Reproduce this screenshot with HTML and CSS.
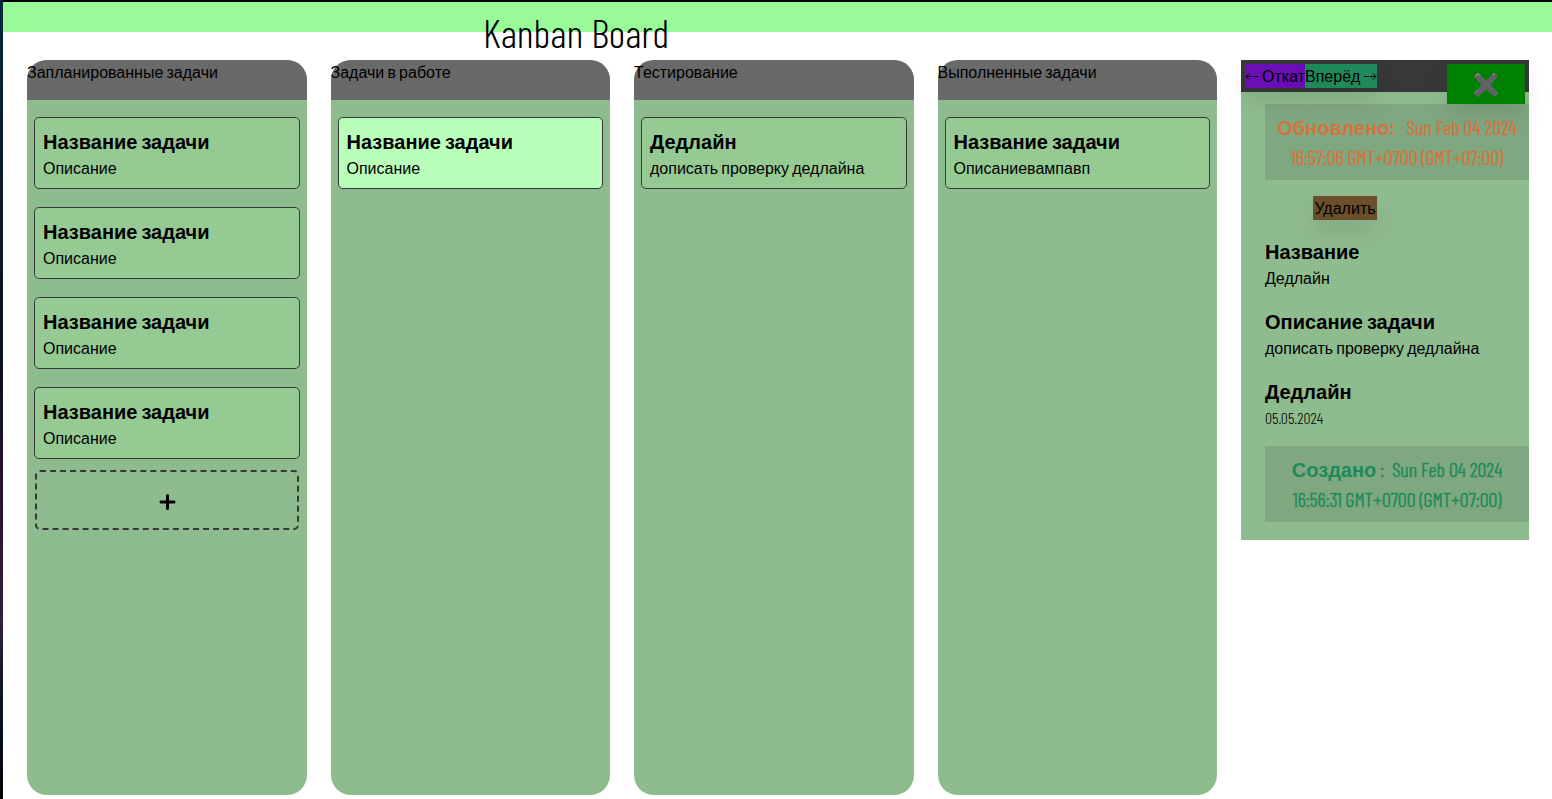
FILE: index.html
```html
<!DOCTYPE html>
<html lang="ru">
<head>
<meta charset="utf-8">
<meta name="viewport" content="width=device-width, initial-scale=1">
<title>Kanban Board</title>
<link rel="stylesheet" href="styles.css">
</head>
<body>
<div class="app">
  <header class="topbar"><h1 class="topbar-title">Kanban Board</h1></header>
  <main class="board">
    <section class="column">
      <h2 class="column-title">Запланированные задачи</h2>
      <div class="column-body">
        <article class="card"><h3 class="card-title">Название задачи</h3><p class="card-text">Описание</p></article>
        <article class="card"><h3 class="card-title">Название задачи</h3><p class="card-text">Описание</p></article>
        <article class="card"><h3 class="card-title">Название задачи</h3><p class="card-text">Описание</p></article>
        <article class="card"><h3 class="card-title">Название задачи</h3><p class="card-text">Описание</p></article>
        <button class="add-card" type="button" aria-label="Добавить задачу">
          <svg class="add-icon" viewBox="0 0 18 18" aria-hidden="true"><path d="M9.500 4.500v13M3 11h13"/></svg>
        </button>
      </div>
    </section>
    <section class="column">
      <h2 class="column-title">Задачи в работе</h2>
      <div class="column-body">
        <article class="card card-active"><h3 class="card-title">Название задачи</h3><p class="card-text">Описание</p></article>
      </div>
    </section>
    <section class="column">
      <h2 class="column-title">Тестирование</h2>
      <div class="column-body">
        <article class="card"><h3 class="card-title">Дедлайн</h3><p class="card-text">дописать проверку дедлайна</p></article>
      </div>
    </section>
    <section class="column">
      <h2 class="column-title">Выполненные задачи</h2>
      <div class="column-body">
        <article class="card"><h3 class="card-title">Название задачи</h3><p class="card-text">Описаниевампавп</p></article>
      </div>
    </section>
    <aside class="panel">
      <div class="panel-bar">
        <button class="btn btn-step btn-back" type="button">
          <svg class="arrow" viewBox="0 0 14 10" aria-hidden="true"><path d="M1 5.500H7M8 5.500H13M4 2.500 1 5.500 4 8.500"/></svg>
          Откат
        </button>
        <button class="btn btn-step btn-next" type="button">
          Вперёд
          <svg class="arrow" viewBox="0 0 14 10" aria-hidden="true"><path d="M1 5.500H6M7 5.500H13M10 2.500 13 5.500 10 8.500"/></svg>
        </button>
        <button class="btn btn-close" type="button" aria-label="Закрыть">
          <svg class="close-icon" viewBox="0 0 28 28" aria-hidden="true">
            <path class="close-shape" d="M6 3 14 11 22 3 25.500 6.500 18 15 26 23 22.500 26.500 14 19 6 27 2 23.500 10 15 2.500 6.500z"/>
            <path class="close-shine" d="M3 6.500 6 3.500 8 5.500M21 4.500 22.500 3.500M3 22.500 5 20.500"/>
          </svg>
        </button>
      </div>
      <div class="panel-body">
        <p class="stamp stamp-updated"><strong>Обновлено:</strong> &nbsp; Sun Feb 04 2024 16:57:06 GMT+0700 (GMT+07:00)</p>
        <button class="btn btn-delete" type="button">Удалить</button>
        <section class="field"><h3 class="card-title">Название</h3><p class="card-text">Дедлайн</p></section>
        <section class="field"><h3 class="card-title">Описание задачи</h3><p class="card-text">дописать проверку дедлайна</p></section>
        <section class="field"><h3 class="card-title">Дедлайн</h3><p class="card-text card-date">05.05.2024</p></section>
        <p class="stamp stamp-created"><strong>Создано</strong> : &nbsp;Sun Feb 04 2024 16:56:31 GMT+0700 (GMT+07:00)</p>
      </div>
    </aside>
  </main>
</div>
</body>
</html>
```
FILE: styles.css
```css
* { box-sizing: border-box; }
body {
  margin: 0;
  background: linear-gradient(#03283a, #10182c 25%, #0a1124 45%, #2b1030 60%, #302038 78%, #071426 88%, #030208);
  color: #000;
  font: 16px/24px "Barlow Condensed", "Liberation Sans", Arial, sans-serif;
}
h1, h2, h3, p { margin: 0; }
button { font: inherit; color: inherit; cursor: pointer; }

.app {
  margin-left: 3px;
  min-height: 100vh;
  border-top: 2px solid #000;
  background: #fff;
}
.topbar { height: 30px; background: #98fb98; }
.topbar-title {
  width: 74%;
  padding-top: 6px;
  text-align: center;
  font-size: 40px;
  line-height: 48px;
  font-weight: 300;
}
.board {
  display: grid;
  grid-template-columns: repeat(4, minmax(0, 1fr)) 288px;
  gap: 24px;
  align-items: start;
  padding: 28px 23px 4px 24px;
}
.column {
  display: flex;
  flex-direction: column;
  min-height: calc(100vh - 64px);
  border-radius: 20px;
  background: #8fbc8f;
}
.column-title {
  height: 40px;
  border-radius: 20px 20px 0 0;
  background: #696969;
  font-size: 16px;
  font-weight: 400;
}
.column-body {
  display: flex;
  flex-direction: column;
  gap: 18px;
  padding: 17px 7px;
}
.card {
  padding: 8px;
  border: 1px solid #383838;
  border-radius: 5px;
  background: #95cb93;
}
.card-active { background: #b9ffb9; }
.card-title { font-size: 20px; line-height: 30px; font-weight: 700; }
.card-text { line-height: 24px; }
.card-date { font-weight: 300; }
.add-card {
  display: grid;
  place-items: center;
  height: 60px;
  margin: -7px 1px 0;
  border: 2px dashed #383838;
  border-radius: 5px;
  background: none;
}
.add-icon { width: 18px; height: 18px; fill: none; stroke: #000; stroke-width: 3; stroke-linecap: round; overflow: visible; }

.panel { background: #8fbc8f; }
.panel-bar {
  display: flex;
  align-items: flex-start;
  height: 32px;
  padding: 4px;
  background: #383838;
}
.btn {
  height: 24px;
  padding: 0;
  border: 0;
  white-space: nowrap;
  box-shadow: 0 12px 24px rgba(0, 0, 0, .1);
}
.btn-step { display: flex; align-items: center; gap: 3px; }
.arrow { width: 14px; height: 10px; fill: none; stroke: #000; stroke-width: 1; }
.btn-back { background: #6a0fb5; }
.btn-next { background: #1e8a5c; }
.btn-close {
  display: grid;
  place-items: center;
  width: 78px;
  height: 40px;
  margin-left: auto;
  background: #008000;
}
.close-icon { width: 28px; height: 28px; }
.close-shape { fill: #5f6368; stroke: #5f6368; stroke-width: 1; stroke-linejoin: round; }
.close-shine { fill: none; stroke: #a0a3a5; stroke-width: 1; stroke-linecap: round; }
.panel-body { padding: 12px 0 18px 24px; }
.stamp {
  padding: 8px 10px;
  background: rgba(0, 0, 0, .1);
  text-align: center;
  font-size: 20px;
  line-height: 30px;
  font-weight: 300;
  -webkit-text-stroke: 0.03em currentColor;
}
.stamp strong { font-weight: 700; -webkit-text-stroke: 0; }
.stamp-updated { color: #d2733f; }
.stamp-created { color: #1e8a5c; }
.btn-delete { display: block; width: 64px; margin: 16px 0 16px 48px; background: #6b4f2a; }
.field { margin-bottom: 16px; }
```
